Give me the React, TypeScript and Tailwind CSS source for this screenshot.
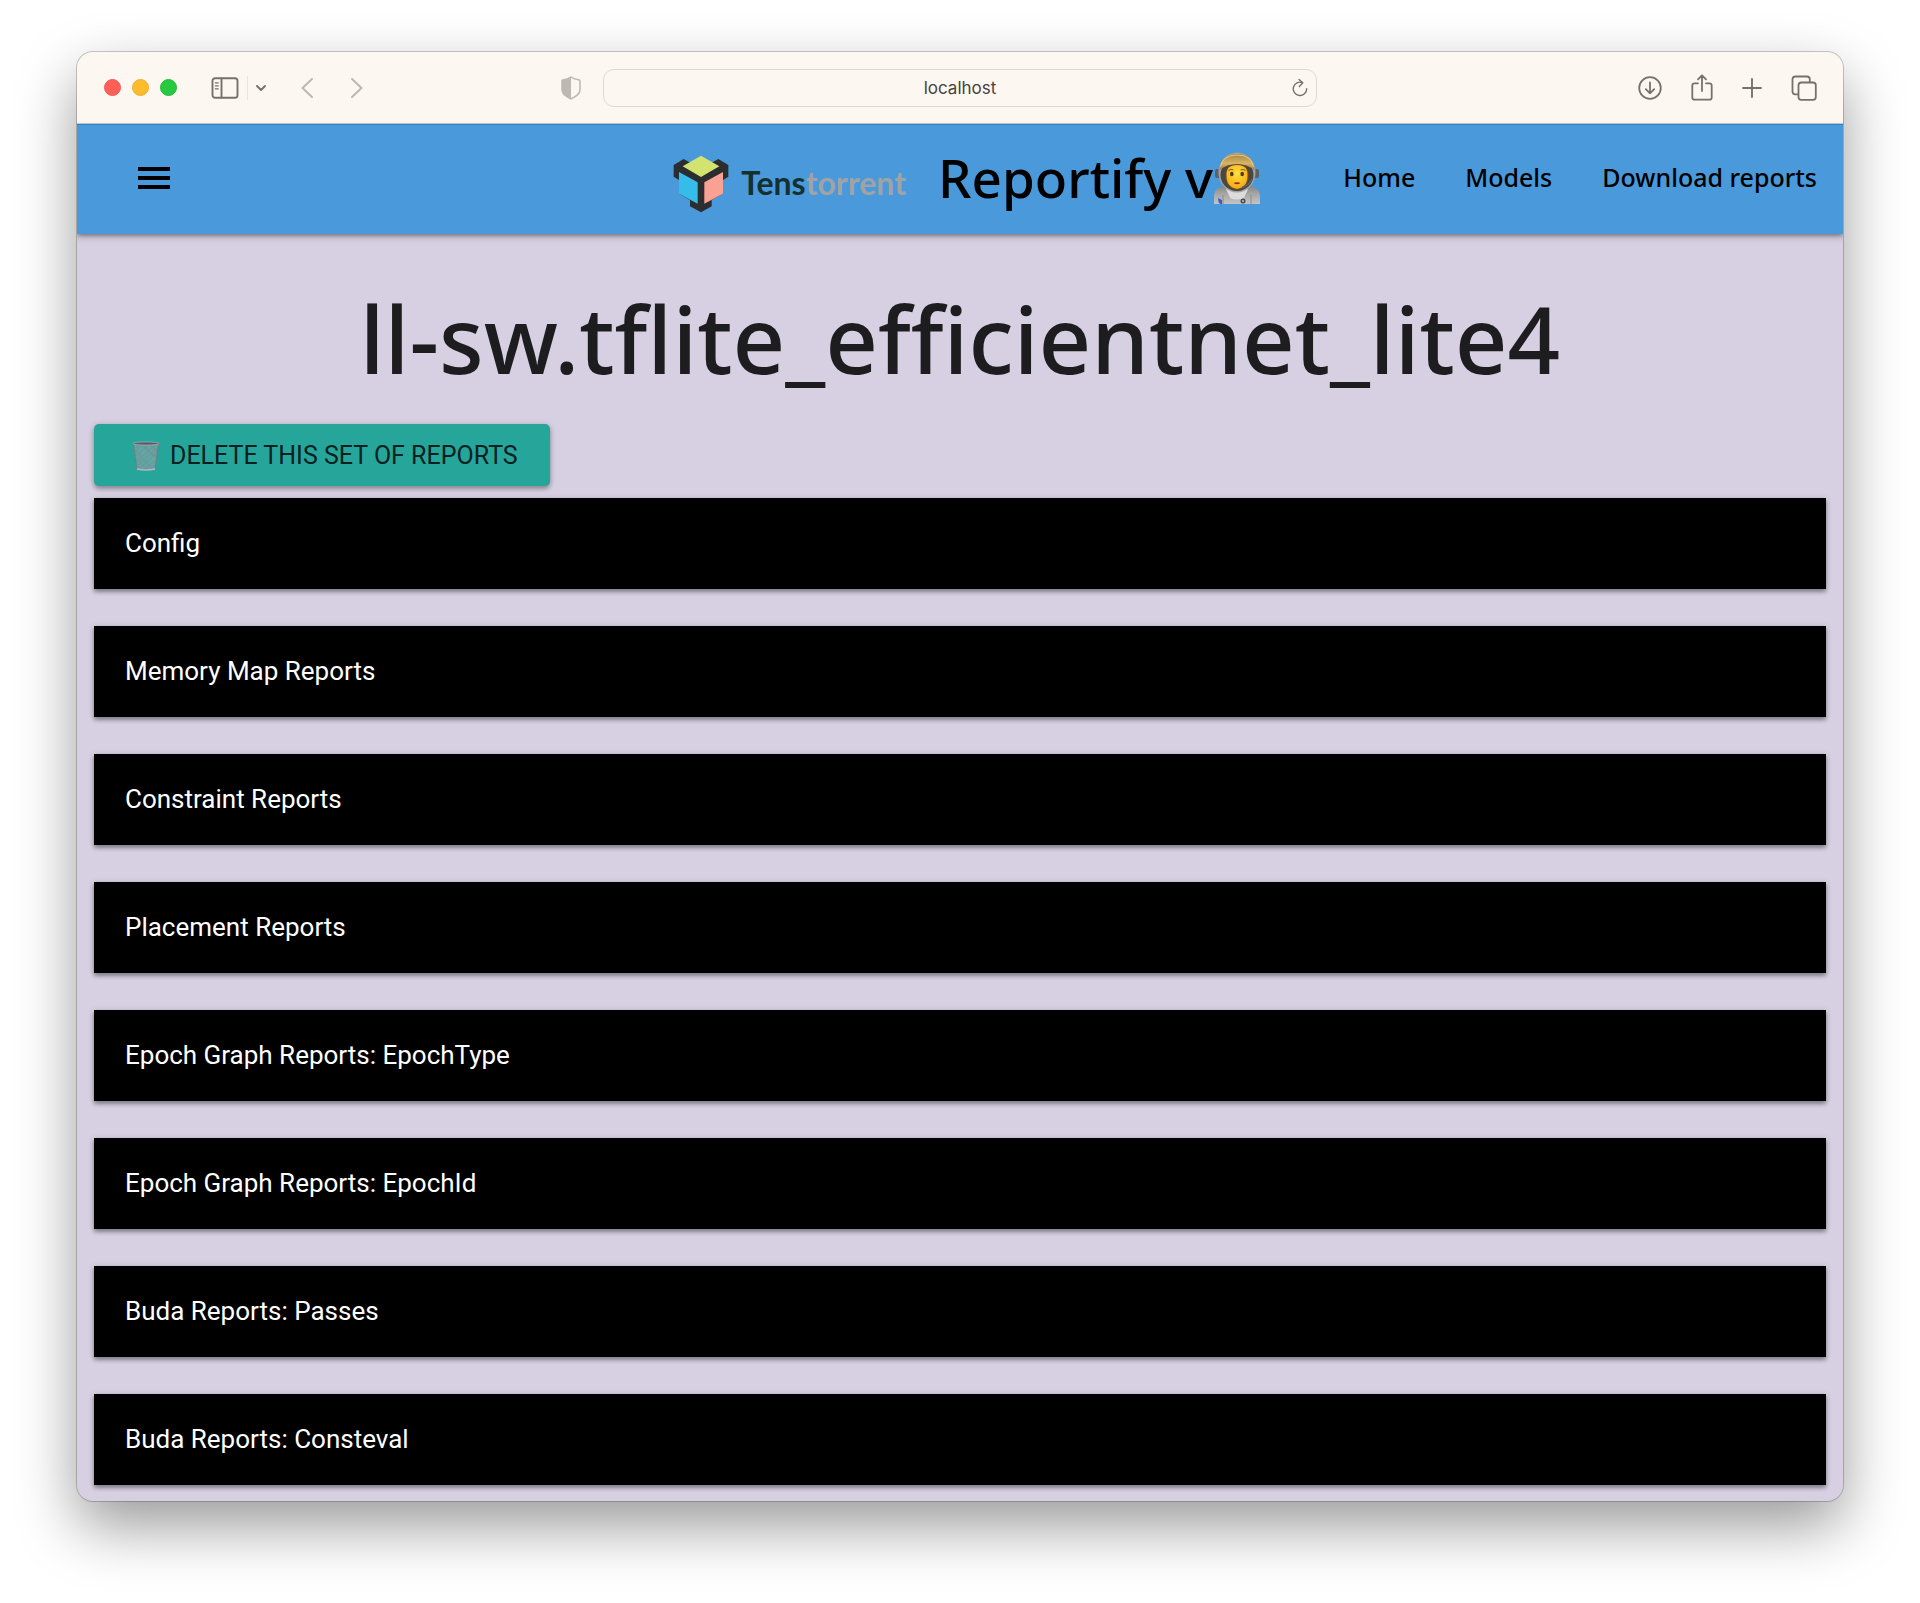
import type { ReactNode } from "react";

const reports = [
  "Config",
  "Memory Map Reports",
  "Constraint Reports",
  "Placement Reports",
  "Epoch Graph Reports: EpochType",
  "Epoch Graph Reports: EpochId",
  "Buda Reports: Passes",
  "Buda Reports: Consteval",
];

const links = ["Home", "Models", "Download reports"];

function IconButton({ label, children }: { label: string; children: ReactNode }) {
  return (
    <button type="button" aria-label={label} className="flex shrink-0 items-center justify-center">
      {children}
    </button>
  );
}

function BrowserBar() {
  return (
    <div className="grid h-[72px] grid-cols-[1fr_minmax(0,714px)_1fr] items-center border-b border-[#c9d3dc] bg-[#fcf7f1] text-[#77716b]">
      <div className="flex items-center pl-[27px]">
        <div className="flex gap-[11px]">
          <button type="button" aria-label="Close" className="size-[17px] rounded-full border border-[#ee5a52] bg-[#ff5f57]" />
          <button type="button" aria-label="Minimize" className="size-[17px] rounded-full border border-[#eeae2f] bg-[#febb2e]" />
          <button type="button" aria-label="Full screen" className="size-[17px] rounded-full border border-[#25b93b] bg-[#28c840]" />
        </div>
        <div className="ml-[34px] flex items-center">
          <IconButton label="Sidebar">
            <svg width="28" height="22" viewBox="0 0 28 22" fill="none" stroke="currentColor" strokeWidth="1.9" strokeLinecap="round">
              <rect x="1.5" y="1.2" width="25" height="19.6" rx="2.6" />
              <path d="M10.5 1.5v19" />
              <path d="M4.3 5.8h3M4.3 8.8h3M4.3 11.8h3" strokeWidth="1.2" />
            </svg>
          </IconButton>
          <span className="ml-2 h-6 w-px bg-[#e9e4df]" />
          <span className="ml-2">
            <IconButton label="Sidebar options">
              <svg width="10" height="8" viewBox="0 0 10 8" fill="none" stroke="currentColor" strokeWidth="1.9" strokeLinecap="round" strokeLinejoin="round">
                <path d="M1 2l4 4 4-4" />
              </svg>
            </IconButton>
          </span>
        </div>
        <div className="ml-[35px] flex gap-[38px] text-[#bdb8b2]">
          <IconButton label="Back">
            <svg width="12" height="20" viewBox="0 0 12 20" fill="none" stroke="currentColor" strokeWidth="2" strokeLinecap="round" strokeLinejoin="round">
              <path d="M11 1L1.5 10 11 19" />
            </svg>
          </IconButton>
          <IconButton label="Forward">
            <svg width="12" height="20" viewBox="0 0 12 20" fill="none" stroke="currentColor" strokeWidth="2" strokeLinecap="round" strokeLinejoin="round">
              <path d="M1 1l9.500 9L1 19" />
            </svg>
          </IconButton>
        </div>
        <div className="mr-[22px] ml-auto text-[#bdb8b1]">
          <IconButton label="Privacy report">
            <svg width="20" height="24" viewBox="0 0 20 24">
              <path d="M10 1.200C7.500 2.800 4.500 3.600 1.800 4q-.8.200-.8 1v9c0 4.300 4.600 6.500 9 9 4.400-2.500 9-4.700 9-9V5q0-.8-.8-1C15.500 3.600 12.500 2.800 10 1.200z" fill="none" stroke="currentColor" strokeWidth="1.500" />
              <path d="M10 1.200C7.500 2.800 4.500 3.600 1.800 4q-.8.200-.8 1v9c0 4.300 4.600 6.500 9 9z" fill="currentColor" />
            </svg>
          </IconButton>
        </div>
      </div>
      <div className="flex h-[38px] items-center rounded-[11px] border border-[#dfdad5] pr-2 pl-6">
        <input
          type="text"
          aria-label="Address"
          defaultValue="localhost"
          className="min-w-0 flex-1 bg-transparent pt-0.5 text-center text-[17px] text-[#47423e] outline-none"
        />
        <IconButton label="Reload">
          <svg width="16" height="20" viewBox="0 0 16 20" fill="none" stroke="currentColor" strokeWidth="1.400" strokeLinecap="round" strokeLinejoin="round">
            <path d="M10.500 4.600A6.700 6.700 0 1 0 14.700 10.800" />
            <path d="M7 1.500l3.800 3.300L7.300 8.400" />
          </svg>
        </IconButton>
      </div>
      <div className="flex items-center justify-end gap-[29px] pr-[26px]">
        <IconButton label="Downloads">
          <svg width="24" height="24" viewBox="0 0 24 24" fill="none" stroke="currentColor" strokeWidth="1.800" strokeLinecap="round" strokeLinejoin="round">
            <circle cx="12" cy="12" r="10.800" />
            <path d="M12 6.500v10.800M7.800 13.200l4.200 4.200 4.200-4.200" />
          </svg>
        </IconButton>
        <IconButton label="Share">
          <svg width="22" height="28" viewBox="0 0 22 28" fill="none" stroke="currentColor" strokeWidth="1.800" strokeLinecap="round" strokeLinejoin="round">
            <path d="M7 9.300H3.500Q1.300 9.300 1.300 11.500V23.500Q1.300 25.700 3.500 25.700H18.500Q20.700 25.700 20.700 23.500V11.500Q20.700 9.300 18.500 9.300H15" />
            <path d="M11 17V1.500M7 5.300L11 1.300l4 4" />
          </svg>
        </IconButton>
        <IconButton label="New tab">
          <svg width="20" height="20" viewBox="0 0 20 20" fill="none" stroke="currentColor" strokeWidth="1.900" strokeLinecap="round">
            <path d="M10 1v18M1 10h18" />
          </svg>
        </IconButton>
        <IconButton label="Tab overview">
          <svg width="26" height="26" viewBox="0 0 26 26" fill="none" stroke="currentColor" strokeWidth="1.800" strokeLinejoin="round">
            <rect x="7.500" y="7.500" width="17.300" height="17.300" rx="2.800" />
            <path d="M7.500 19.300H4.300Q1.500 19.300 1.500 16.500V4.300Q1.500 1.500 4.300 1.500H16Q18.800 1.500 18.800 4.300V7.500" />
          </svg>
        </IconButton>
      </div>
    </div>
  );
}

function LogoMark() {
  return (
    <svg width="56" height="58" viewBox="66 76 168 174" aria-hidden="true">
      <path
        d="M68 106L98 88l16 9h72l16-9 30 18v35l-16 10v41l-34 19v19l-32 18-33-18v-19l-33-19v-41l-16-10z"
        fill="#2b2d2f"
      />
      <path d="M95 110l55-32 55 32-55 32z" fill="#d3e36f" />
      <path d="M84 127l56 31v64l-56-30z" fill="#35bce9" />
      <path d="M216 127l-56 31v64l56-30z" fill="#f9a294" />
    </svg>
  );
}

function Astronaut() {
  return (
    <svg width="48" height="54" viewBox="0 0 48 54" role="img" aria-label="Astronaut">
      <defs>
        <linearGradient id="suit" x1="0" y1="0" x2="0" y2="1">
          <stop offset="0" stopColor="#858585" />
          <stop offset="0.4" stopColor="#a4a4a4" />
          <stop offset="1" stopColor="#c4c4c4" />
        </linearGradient>
        <linearGradient id="visor" x1="0" y1="0" x2="0" y2="1">
          <stop offset="0" stopColor="#a8853f" />
          <stop offset="0.6" stopColor="#d8b566" />
          <stop offset="1" stopColor="#9a7838" />
        </linearGradient>
        <radialGradient id="face" cx="0.5" cy="0.35" r="0.65">
          <stop offset="0" stopColor="#ffe03d" />
          <stop offset="1" stopColor="#f3a915" />
        </radialGradient>
      </defs>
      <path d="M1 53V46C1 39 5 36 12 35H36C43 36 47 39 47 46V53Z" fill="url(#suit)" />
      <path d="M10 53V44M38 53V44" stroke="#8c8c8c" strokeWidth="1" />
      <path d="M13 38L17 47Q24 50 31 47L35 38Z" fill="#dcdcdc" />
      <rect x="2" y="18" width="6" height="9" rx="2" fill="#5d6268" />
      <rect x="40" y="18" width="6" height="9" rx="2" fill="#5d6268" />
      <ellipse cx="24" cy="21.500" rx="18.500" ry="20" fill="#a3a3a3" />
      <ellipse cx="24" cy="24" rx="16.500" ry="16" fill="#494744" />
      <path d="M12 25Q11 13 24 13T36 25Q36 37 24 39 12 37 12 25Z" fill="#6b4a22" />
      <path d="M13.500 24Q13 14 24 14T34.500 24Q35 36 24 38 13 36 13.500 24Z" fill="url(#face)" />
      <path d="M6.500 19Q7.500 3 24 3T41.500 19Q34 13 24 13T6.500 19Z" fill="url(#visor)" />
      <path d="M7.500 16Q9.500 4 24 4T40.500 16" fill="none" stroke="#e6ca88" strokeWidth="1" />
      <ellipse cx="18.800" cy="23" rx="1.800" ry="2.300" fill="#553719" />
      <ellipse cx="29.200" cy="23" rx="1.800" ry="2.300" fill="#553719" />
      <path d="M15.500 19.500Q18 17.500 20.500 19M27.500 19Q30 17.500 32.500 19.500" fill="none" stroke="#8b5b18" strokeWidth="1" />
      <path d="M20.500 32Q24 30.500 27.500 32 24 34.500 20.500 32Z" fill="#8a2f1e" />
      <path d="M39 28Q37 34 29 36.500" fill="none" stroke="#5d6268" strokeWidth="1.500" />
      <circle cx="30" cy="50" r="2.500" fill="#4a4a4a" />
      <circle cx="30" cy="50" r="1" fill="#c0c0c0" />
      <path d="M5 47l4 2v4H7q-2-2-2-6z" fill="#3b5fc4" />
    </svg>
  );
}

function SiteHeader() {
  return (
    <header className="relative grid h-[110px] grid-cols-[1fr_auto_1fr] items-center border-t border-[#2f80c2] bg-[#4a99db] pb-1 font-['Noto_Sans',sans-serif] font-medium text-black shadow-[0_2px_4px_rgba(0,0,0,0.35),0_4px_8px_rgba(0,0,0,0.12)]">
      <div className="flex pl-[61px]">
        <button type="button" aria-label="Menu" className="flex flex-col gap-[5px]">
          <span className="h-[4px] w-[32px] bg-black" />
          <span className="h-[4px] w-[32px] bg-black" />
          <span className="h-[4px] w-[32px] bg-black" />
        </button>
      </div>
      <div className="flex items-center pl-3.5">
        <a href="#home" className="flex items-center gap-3 pt-3">
          <LogoMark />
          <span className="pb-0.5 font-['Lato',sans-serif] text-[32px] leading-10 font-bold text-[#a0a3a5]">
            <span className="text-[#14302f]">Tens</span>torrent
          </span>
        </a>
        <a href="#home" className="ml-8 flex items-center text-[53px] leading-[64px]">
          Reportify v
          <Astronaut />
        </a>
      </div>
      <nav className="flex justify-end gap-[50px] pr-[26px] text-[25px] whitespace-nowrap">
        {links.map((label) => (
          <a key={label} href="#nav">
            {label}
          </a>
        ))}
      </nav>
    </header>
  );
}

function TrashIcon() {
  return (
    <svg width="28" height="30" viewBox="0 0 28 30" fill="none" aria-hidden="true">
      <path d="M1.500 3L5 28.500h18L26.500 3z" fill="#5fa7a4" stroke="#6a7f84" strokeWidth="1" />
      <path
        d="M2 8l7-5 12 12 4-5M2.500 11L11 3l13 13M3 16L17 3l8 7M4 21L23 4M4.500 25L25 7M7 28L24 13M13 28l11-9M19 28l4-4M2.500 8l18 20M3.500 16l11 12M4.500 23l4 5M17 3l8 8"
        stroke="#7d8a90"
        strokeWidth="0.800"
      />
      <ellipse cx="14" cy="2.500" rx="13" ry="1.600" fill="#546068" stroke="#a3a9b5" strokeWidth="0.800" />
      <path d="M5 28q9 2 18 0" stroke="#b9b4cc" strokeWidth="1.500" />
    </svg>
  );
}

export default function App() {
  return (
    <div className="min-h-screen bg-white px-[77px] pt-[52px] pb-[102px] font-['Inter',sans-serif]">
      <div className="overflow-hidden rounded-[16px] bg-[#d7d0e2] shadow-[0_0_0_1px_rgba(0,0,0,0.2),0_25px_60px_rgba(0,0,0,0.4)]">
        <BrowserBar />
        <SiteHeader />
        <main className="px-[17px] pb-4 font-['Roboto',sans-serif]">
          <h1 className="pt-5 text-center font-['Noto_Sans',sans-serif] text-[92px] leading-[170px] font-medium text-[#1d1d1f]">
            ll-sw.tflite_efficientnet_lite4
          </h1>
          <button
            type="button"
            className="flex h-[62px] items-center gap-2.5 rounded-[5px] bg-[#26a69a] pt-0.5 pr-8 pl-[38px] text-[25px] text-[#06201f] shadow-[0_3px_4px_rgba(0,0,0,0.25),0_1px_6px_rgba(0,0,0,0.2)]"
          >
            <TrashIcon />
            DELETE THIS SET OF REPORTS
          </button>
          <ul className="mt-3 flex flex-col gap-[37px]">
            {reports.map((name) => (
              <li key={name}>
                <button
                  type="button"
                  className="flex h-[91px] w-full items-center bg-black px-[31px] text-left text-[26px] text-white shadow-[0_3px_4px_rgba(0,0,0,0.3),0_1px_6px_rgba(0,0,0,0.2)]"
                >
                  {name}
                </button>
              </li>
            ))}
          </ul>
        </main>
      </div>
    </div>
  );
}
